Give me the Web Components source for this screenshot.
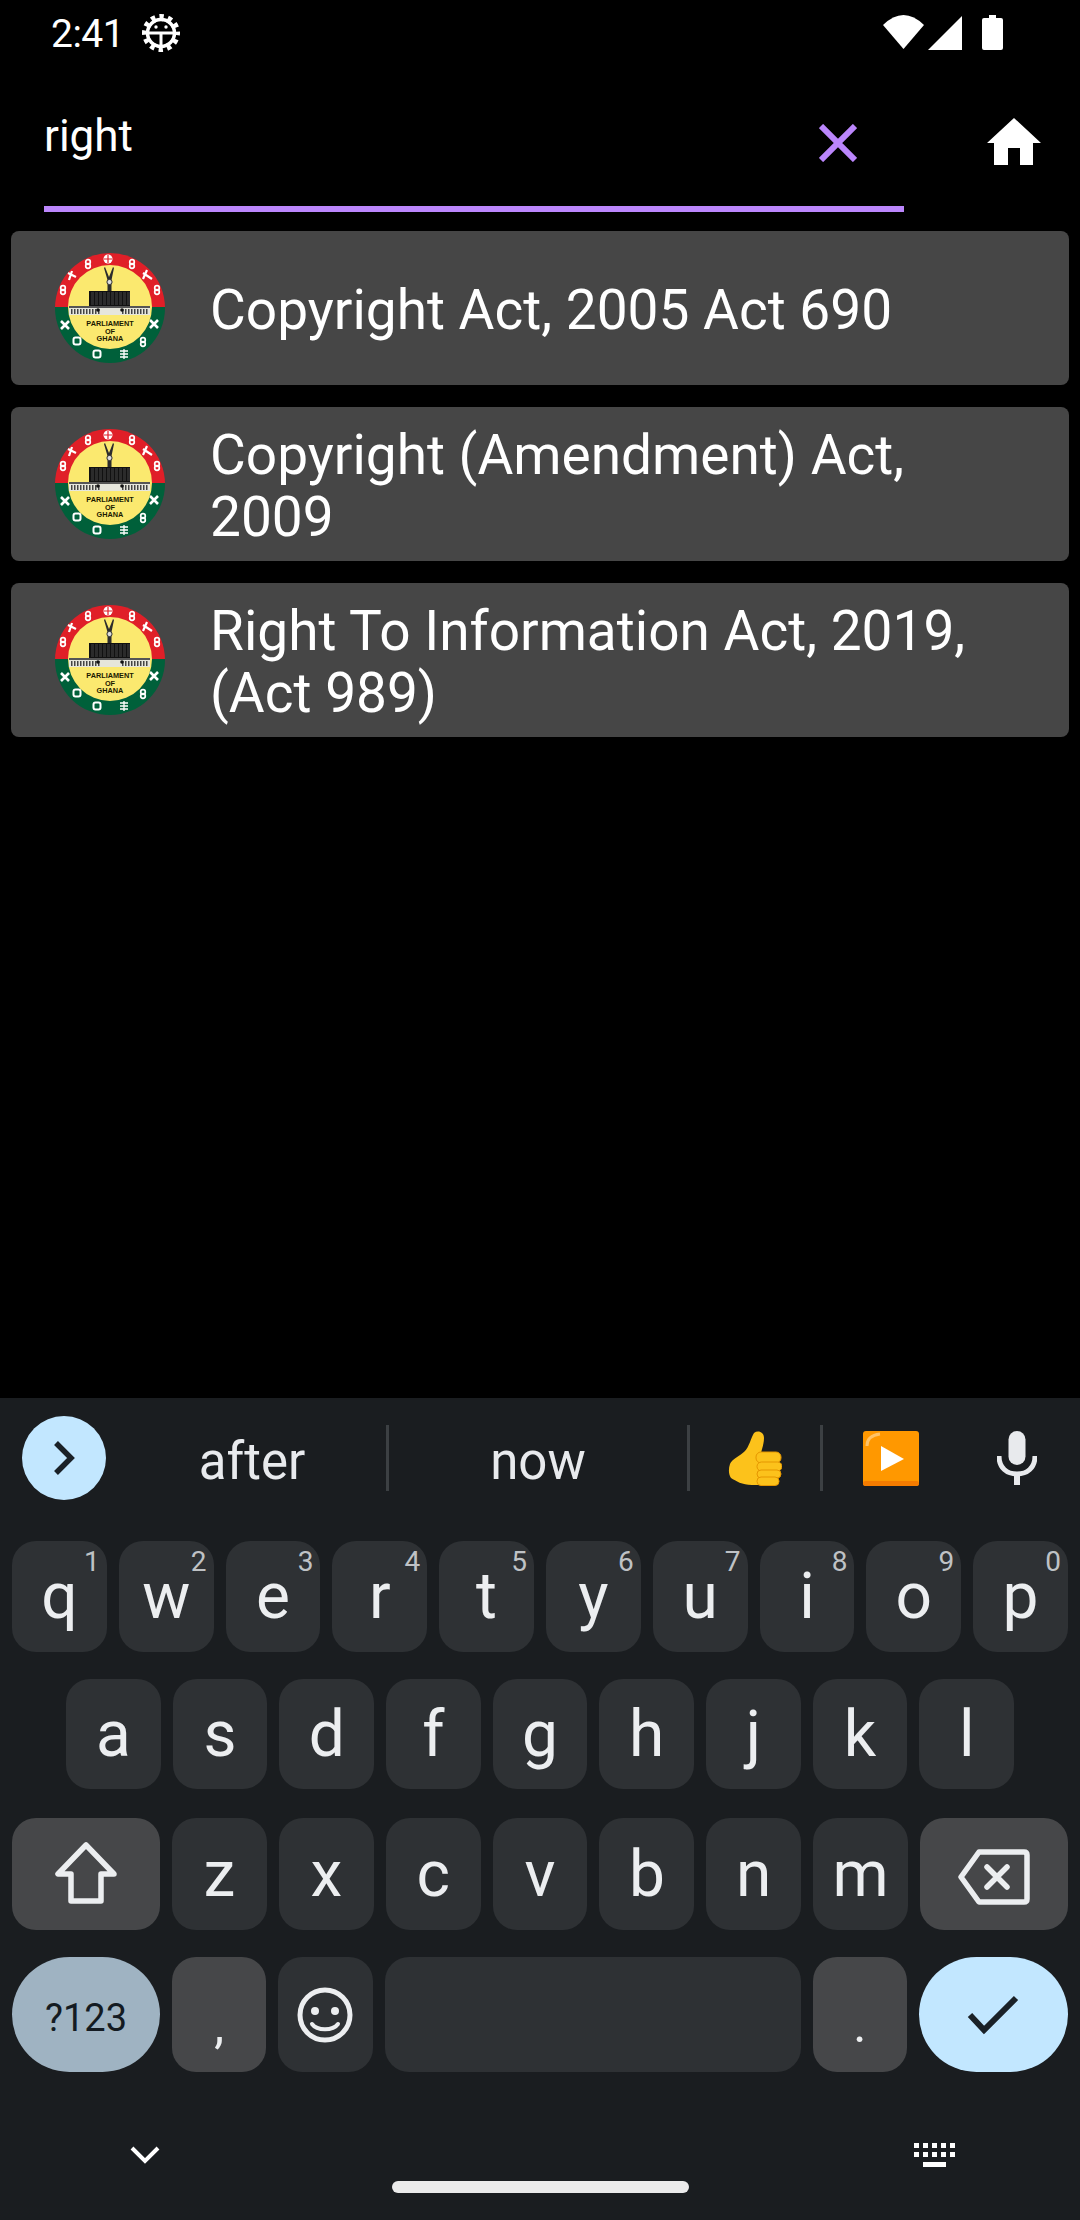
<!DOCTYPE html>
<html lang="en">
<head>
<meta charset="utf-8">
<title>Search</title>
<style>
  html, body { margin: 0; height: 2220px; background: #000; }
  body { display: flex; flex-direction: column; overflow: hidden; font-family: Roboto, "Liberation Sans", sans-serif; color: #fff; }
</style>
</head>
<body>
<status-bar></status-bar>
<search-bar value="right"></search-bar>
<result-list>
  <result-card>Copyright Act, 2005 Act 690</result-card>
  <result-card>Copyright (Amendment) Act, 2009</result-card>
  <result-card>Right To Information Act, 2019, (Act 989)</result-card>
</result-list>
<soft-keyboard></soft-keyboard>

<script>
// --- Small helper: every element gets an open shadow root from a string ---
class ShadowBase extends HTMLElement {
  constructor(html) {
    super();
    this.attachShadow({ mode: 'open' });
    this.shadowRoot.innerHTML = html;
  }
}

// --- Status bar ---
class StatusBar extends ShadowBase {
  constructor() {
    super(`
      <style>
        :host { display: flex; align-items: flex-start; height: 66px; padding-left: 51px; padding-right: 77px; box-sizing: border-box; }
        .time { font-size: 39px; line-height: 46px; margin-top: 11px; color: #fff; letter-spacing: -0.5px; }
        svg { display: block; fill: #fff; }
        .gear { margin: 14px 0 0 18px; }
        .wifi { margin: 15px 0 0 auto; }
        .signal { margin: 16px 0 0 4px; }
        .battery { margin: 15px 0 0 20px; }
      </style>
      <span class="time">2:41</span>
      <svg class="gear" width="38" height="38" viewBox="0 0 38 38">
        <circle cx="19" cy="19" r="15.5" fill="none" stroke="#fff" stroke-width="7" stroke-dasharray="4.1 4.02" stroke-dashoffset="2"/>
        <circle cx="19" cy="19" r="13.5" fill="none" stroke="#fff" stroke-width="3.5"/>
        <rect x="6" y="17.5" width="26" height="3"/>
        <rect x="17.5" y="19" width="3" height="13"/>
        <circle cx="14" cy="13" r="1.7"/><circle cx="24" cy="13" r="1.7"/>
      </svg>
      <svg class="wifi" width="41" height="34" viewBox="0 0 41 34"><path d="M0 10Q20.500-10 41 10L20.500 34Z"/></svg>
      <svg class="signal" width="34" height="34" viewBox="0 0 34 34"><path d="M34 0V34H0Z"/></svg>
      <svg class="battery" width="21" height="35" viewBox="0 0 21 35"><path d="M7 0H14V3H19Q21 3 21 5V33Q21 35 19 35H2Q0 35 0 33V5Q0 3 2 3H7Z"/></svg>
    `);
  }
}

// --- Search field with clear and home buttons ---
class SearchBar extends ShadowBase {
  constructor() {
    super(`
      <style>
        :host { display: flex; align-items: flex-start; height: 146px; padding-left: 44px; box-sizing: border-box; }
        .field { display: flex; justify-content: space-between; width: 860px; height: 146px; box-sizing: border-box; border-bottom: 6px solid #bb86fc; padding-right: 47px; }
        .value { font-size: 44px; line-height: 52px; margin-top: 44px; color: #fff; }
        svg { display: block; }
        .clear { margin-top: 58px; }
        .home { margin: 52px 0 0 83px; fill: #fff; }
      </style>
      <div class="field">
        <span class="value"></span>
        <svg class="clear" width="38" height="38" viewBox="0 0 38 38"><path d="M2 2L36 36M36 2L2 36" stroke="#bb86fc" stroke-width="6" fill="none"/></svg>
      </div>
      <svg class="home" width="54" height="47" viewBox="0 0 54 47"><path d="M27 0L54 25H46V47H33V30H21V47H7V25H0Z"/></svg>
    `);
  }

  connectedCallback() {
    this.shadowRoot.querySelector('.value').textContent = this.getAttribute('value');
  }
}

// --- Round Parliament of Ghana crest ---
class ParliamentLogo extends ShadowBase {
  constructor() {
    // spots of the white symbols on the ring
    const knots = [[33, 11], [77, 11], [8, 37], [102, 37], [88, 89]];
    const crosses = [[10, 72], [99, 71]];
    const others = [[22, 88, 3.5], [42, 101, 3.5]];
    let marks = '<circle cx="53" cy="6" r="4.500" fill="#fff"/><path d="M53 2V10M49 6H57" stroke="#e01f28" stroke-width="1.200"/>';
    marks += '<path d="M14 27L17 18M13 20L21 24M92 17L88 26M88 20L97 26" stroke="#fff" stroke-width="2.200" fill="none"/>';
    marks += '<path d="M69 96V106M65 98H73M65 101H73M65 104H73" stroke="#fff" stroke-width="1.300"/>';
    knots.forEach(([x, y]) => {
      marks += `<circle cx="${x}" cy="${y - 2}" r="2.300" fill="none" stroke="#fff" stroke-width="1.700"/><circle cx="${x}" cy="${y + 2}" r="2.300" fill="none" stroke="#fff" stroke-width="1.700"/>`;
    });
    crosses.forEach(([x, y]) => {
      marks += `<path d="M${x - 4} ${y - 4}L${x + 4} ${y + 4}M${x + 4} ${y - 4}L${x - 4} ${y + 4}" stroke="#fff" stroke-width="2.600"/>`;
    });
    others.forEach(([x, y, r]) => {
      marks += `<rect x="${x - r}" y="${y - r}" width="${r * 2}" height="${r * 2}" rx="2" fill="none" stroke="#fff" stroke-width="2"/>`;
    });
    let windows = '';
    for (let x = 36; x < 75; x += 4) windows += `<rect x="${x}" y="39" width="3" height="13" fill="#2b2b2b"/>`;
    let wings = '';
    for (let x = 16; x < 94; x += 3) {
      if (x < 44 || x > 64) wings += `<rect x="${x}" y="56" width="1.500" height="5" fill="#444"/>`;
    }
    super(`
      <style>
        :host { display: block; flex: none; width: 110px; height: 110px; }
        svg { display: block; }
        text { font-family: "Liberation Sans", sans-serif; font-weight: 700; font-size: 7.3px; text-anchor: middle; fill: #1c1a00; }
      </style>
      <svg width="110" height="110" viewBox="0 0 110 110">
        <defs><clipPath id="disc"><circle cx="55" cy="55" r="55"/></clipPath></defs>
        <g clip-path="url(#disc)">
          <rect width="110" height="54" fill="#e01f28"/>
          <rect y="54" width="110" height="56" fill="#00603a"/>
        </g>
        ${marks}
        <circle cx="55" cy="54" r="42" fill="#fbe96f"/>
        <path d="M50 14L54 24L58 14L59 15L56.500 27V38H52.500V27L49 15Z" fill="#2c2c2c"/>
        <circle cx="54.500" cy="29" r="2.600" fill="#ddd" stroke="#333"/>
        <rect x="34" y="38" width="41" height="16" fill="#111"/>
        ${windows}
        <rect x="14" y="53" width="81" height="9" fill="#e6e6dc"/>
        <rect x="14" y="53" width="81" height="2" fill="#555"/>
        ${wings}
        <circle cx="43" cy="57" r="1.800" fill="#111"/><circle cx="67" cy="57" r="1.800" fill="#111"/>
        <text x="55" y="73">PARLIAMENT</text>
        <text x="55" y="80.500">OF</text>
        <text x="55" y="88">GHANA</text>
      </svg>
    `);
  }
}

// --- One row of the search results ---
class ResultCard extends ShadowBase {
  constructor() {
    super(`
      <style>
        :host { display: flex; align-items: center; height: 154px; background: #464646; border-radius: 8px; padding: 0 44px; gap: 45px; box-sizing: border-box; }
        .title { font-size: 55px; line-height: 62px; padding-top: 3px; color: #fff; }
      </style>
      <parliament-logo></parliament-logo>
      <div class="title"><slot></slot></div>
    `);
  }
}

class ResultList extends ShadowBase {
  constructor() {
    super(`
      <style>:host { display: flex; flex-direction: column; gap: 22px; padding: 19px 11px 0; }</style>
      <slot></slot>
    `);
  }
}

// --- A key: label goes in the slot, digit hint in the attribute ---
class KbKey extends ShadowBase {
  constructor() {
    super(`
      <style>
        :host { display: flex; position: relative; align-items: center; justify-content: center; flex: 1 1 0; min-width: 0; background: #2e3134; border-radius: 24px; color: #eceef0; font-size: 64px; }
        :host([kind=fn]) { background: #464749; flex: 0 0 148px; }
        :host([kind=punct]) { background: #464749; font-size: 50px; padding-top: 20px; box-sizing: border-box; }
        :host([kind=num]) { background: #9fb3c2; color: #141b22; flex: 0 0 148px; border-radius: 58px; font-size: 38px; padding-top: 6px; box-sizing: border-box; }
        :host([kind=ok]) { background: #c2e7ff; flex: 0 0 149px; border-radius: 58px; }
        :host([kind=space]) { flex: 0 0 416px; }
        .hint { position: absolute; top: 4px; right: 7px; font-size: 28px; line-height: 34px; color: #bfc2c5; }
        svg { display: block; }
      </style>
      <slot></slot>
      <span class="hint"></span>
    `);
  }

  connectedCallback() {
    this.shadowRoot.querySelector('.hint').textContent = this.getAttribute('hint') || '';
  }
}

// --- Suggestion strip on top of the keyboard ---
class KbSuggestions extends ShadowBase {
  constructor() {
    super(`
      <style>
        :host { display: flex; align-items: flex-start; height: 143px; padding: 18px 0 0 22px; box-sizing: border-box; color: #e8eaed; font-size: 51px; }
        .more { flex: none; width: 84px; height: 84px; border-radius: 50%; background: #c2e7ff; display: flex; align-items: center; justify-content: center; }
        .cell { flex: none; height: 84px; box-sizing: border-box; display: flex; align-items: center; justify-content: center; }
        .word { padding-top: 7px; }
        .after { width: 280px; padding-left: 12px; }
        .now { width: 298px; }
        .thumb { width: 130px; padding-top: 1px; }
        .play { width: 135px; padding-top: 1px; }
        .mic { width: 118px; }
        i { flex: none; width: 3px; height: 66px; margin-top: 9px; background: #3c4043; }
        svg { display: block; }
      </style>
      <div class="more"><svg width="24" height="36" viewBox="0 0 24 36"><path d="M4 3L19 18L4 33" fill="none" stroke="#1a2127" stroke-width="5.500"/></svg></div>
      <div class="cell word after">after</div><i></i>
      <div class="cell word now">now</div><i></i>
      <div class="cell thumb">
        <svg width="54" height="55" viewBox="0 0 54 55">
          <path d="M26 2C30-1 36 1 36 7C36 13 34 17 33 22L40 54H24C14 54 8 50 3 47C1 44 0 39 2 33C4 28 12 25 17 20C21 16 23 7 26 2Z" fill="#fcc21b"/>
          <g fill="#fcc21b" stroke="#e59600" stroke-width="1">
            <rect x="28" y="21" width="25" height="11" rx="5"/>
            <rect x="29" y="31" width="25" height="9" rx="4.500"/>
            <rect x="29" y="39" width="24" height="8" rx="4"/>
            <rect x="29" y="46" width="22" height="8.500" rx="4"/>
          </g>
        </svg>
      </div><i></i>
      <div class="cell play">
        <svg width="56" height="55" viewBox="0 0 56 55">
          <rect width="56" height="55" rx="3" fill="#ff9800"/>
          <rect y="50" width="56" height="5" rx="2.500" fill="#f57c00"/>
          <path d="M4 15C4 8 8 4 17 3" fill="none" stroke="#ffc266" stroke-width="3"/>
          <path d="M18 15L41 28L18 40Z" fill="#fff"/>
        </svg>
      </div>
      <div class="cell mic">
        <svg width="40" height="54" viewBox="0 0 40 54">
          <rect x="11.500" y="0" width="17" height="34" rx="8.500" fill="#e8eaed"/>
          <path d="M2 25C2 37 10 43 20 43C30 43 38 37 38 25" fill="none" stroke="#e8eaed" stroke-width="5"/>
          <rect x="17" y="43" width="6" height="11" fill="#e8eaed"/>
        </svg>
      </div>
    `);
  }
}

class KbRow extends ShadowBase {
  constructor() {
    super(`
      <style>
        :host { display: flex; gap: 12px; padding: 0 12px; height: var(--h); margin-bottom: var(--after, 0); }
        :host([inset]) { padding: 0 66px; }
      </style>
      <slot></slot>
    `);
  }
}

// --- Gesture bar under the keys ---
class KbNav extends ShadowBase {
  constructor() {
    let dots = '';
    for (let i = 0; i < 5; i++) {
      dots += `<rect x="${i * 9}" y="0" width="5" height="5"/><rect x="${i * 9}" y="9" width="5" height="5"/>`;
    }
    super(`
      <style>
        :host { display: block; flex: 1; }
        .icons { display: flex; justify-content: space-between; padding: 71px 124px 0 130px; height: 38px; align-items: flex-start; }
        .pill { width: 297px; height: 12px; margin: 0 auto; border-radius: 6px; background: #ebebeb; }
        svg { display: block; }
        .down { margin-top: 3px; }
      </style>
      <div class="icons">
        <svg class="down" width="30" height="18" viewBox="0 0 30 18"><path d="M2 2L15 15L28 2" fill="none" stroke="#fff" stroke-width="4"/></svg>
        <svg width="42" height="24" viewBox="0 0 42 24" fill="#fff">${dots}<rect x="9" y="19" width="23" height="5"/></svg>
      </div>
      <div class="pill"></div>
    `);
  }
}

// --- The whole keyboard; rows are built from plain lists ---
const ICON_SHIFT = '<svg width="70" height="66" viewBox="0 0 70 66"><path d="M35 4L7 33H20V60H50V33H63Z" fill="none" stroke="#eceef0" stroke-width="5.500" stroke-linejoin="round"/></svg>';
const ICON_BACK = '<svg style="margin-top:5px" width="72" height="56" viewBox="0 0 72 56"><path d="M21 3H66Q69 3 69 6V50Q69 53 66 53H21L3 28Z" fill="none" stroke="#eceef0" stroke-width="5.500" stroke-linejoin="round"/><path d="M29 18L49 38M49 18L29 38" stroke="#eceef0" stroke-width="5.500" stroke-linecap="round"/></svg>';
const ICON_SMILE = '<svg width="56" height="56" viewBox="0 0 56 56"><circle cx="28" cy="28" r="25" fill="none" stroke="#eceef0" stroke-width="5"/><circle cx="18" cy="24" r="4" fill="#eceef0"/><circle cx="38" cy="24" r="4" fill="#eceef0"/><path d="M15 37C20 44 36 44 41 37" fill="none" stroke="#eceef0" stroke-width="4" stroke-linecap="round"/></svg>';
const ICON_CHECK = '<svg width="52" height="40" viewBox="0 0 52 40"><path d="M3 20L17 35L49 3" fill="none" stroke="#1a2127" stroke-width="6"/></svg>';

class SoftKeyboard extends ShadowBase {
  constructor() {
    const letters = list => [...list].map(c => `<kb-key>${c}</kb-key>`).join('');
    const top = [...'qwertyuiop'].map((c, i) => `<kb-key hint="${(i + 1) % 10}">${c}</kb-key>`).join('');
    super(`
      <style>
        :host { display: flex; flex-direction: column; margin-top: auto; height: 822px; background: #1a1d20; }
      </style>
      <kb-suggestions></kb-suggestions>
      <kb-row style="--h:111px;--after:27px">${top}</kb-row>
      <kb-row inset style="--h:110px;--after:29px">${letters('asdfghjkl')}</kb-row>
      <kb-row style="--h:112px;--after:27px">
        <kb-key kind="fn">${ICON_SHIFT}</kb-key>${letters('zxcvbnm')}<kb-key kind="fn">${ICON_BACK}</kb-key>
      </kb-row>
      <kb-row style="--h:115px">
        <kb-key kind="num">?123</kb-key>
        <kb-key kind="punct">,</kb-key>
        <kb-key>${ICON_SMILE}</kb-key>
        <kb-key kind="space"></kb-key>
        <kb-key kind="punct">.</kb-key>
        <kb-key kind="ok">${ICON_CHECK}</kb-key>
      </kb-row>
      <kb-nav></kb-nav>
    `);
  }
}

customElements.define('status-bar', StatusBar);
customElements.define('search-bar', SearchBar);
customElements.define('parliament-logo', ParliamentLogo);
customElements.define('result-card', ResultCard);
customElements.define('result-list', ResultList);
customElements.define('kb-key', KbKey);
customElements.define('kb-suggestions', KbSuggestions);
customElements.define('kb-row', KbRow);
customElements.define('kb-nav', KbNav);
customElements.define('soft-keyboard', SoftKeyboard);
</script>
</body>
</html>
